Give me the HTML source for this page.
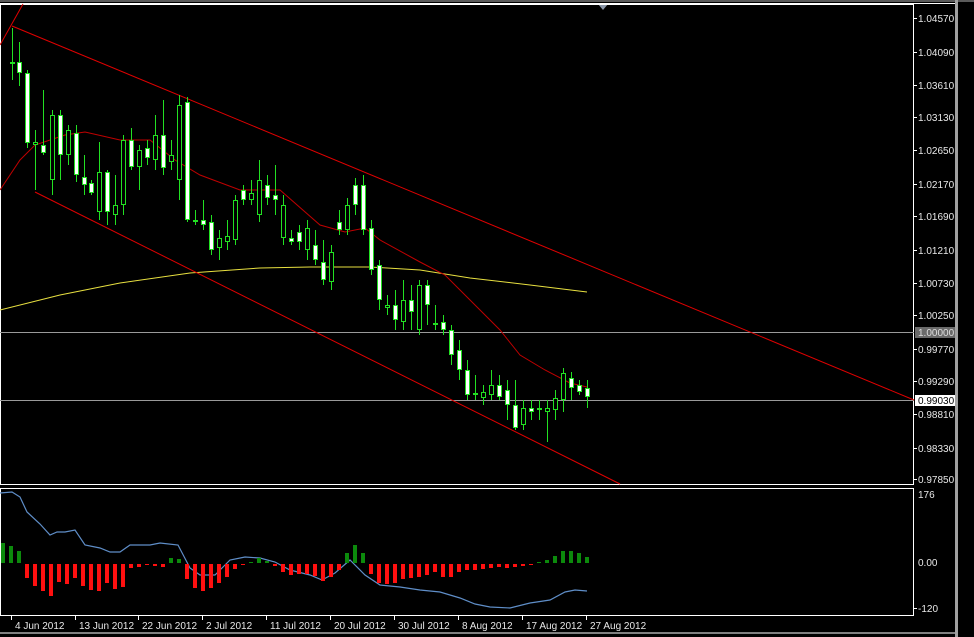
<!DOCTYPE html>
<html><head><meta charset="utf-8"><style>
html,body{margin:0;padding:0;background:#000;width:974px;height:637px;overflow:hidden}
svg{display:block}
text{font-family:"Liberation Sans",sans-serif;font-size:10px;fill:#e8e8e8}
#cd rect,#cd line{shape-rendering:crispEdges}
</style></head><body>
<svg id="s" width="974" height="637" xmlns="http://www.w3.org/2000/svg">
<rect width="974" height="637" fill="#000"/>
<rect x="0" y="0" width="974" height="2" fill="#5a5a5a"/>
<rect x="955" y="0" width="3" height="637" fill="#a0a0a0"/>
<rect x="0" y="3" width="955" height="1" fill="#fff"/>
<polygon points="598,4 608,4 603,10" fill="#8a96a8"/>
<g id="g"></g>
<g id="cd"></g>
</svg>
<script>
var g=document.getElementById('g'),h='',hc='';
function L(pts,c,w){h+='<polyline fill="none" stroke="'+c+'" stroke-width="'+(w||1)+'" points="'+pts.map(p=>p.join(',')).join(' ')+'"/>';}
function R(x,y,w,hh,f,s){h+='<rect x="'+x+'" y="'+y+'" width="'+w+'" height="'+hh+'" fill="'+f+'"'+(s?' stroke="'+s+'"':'')+'/>';}
function T(x,y,t,c){h+='<text x="'+x+'" y="'+y+'"'+(c?' style="fill:'+c+'"':'')+'>'+t+'</text>';}
h+='<rect x="0.5" y="4.5" width="913" height="480" fill="none" stroke="#fff"/>';
h+='<rect x="0.5" y="488.5" width="913" height="127" fill="none" stroke="#fff"/>';
L([[0,633],[955,633]],'#fff');
L([[0,332.5],[914,332.5]],'#9a9a9a');L([[0,400.5],[914,400.5]],'#9a9a9a');
L([[0,310],[60,295],[120,283],[190,273],[260,268],[310,267],[370,267],[420,270],[470,278],[530,285],[587,292]],'#e8e040');
L([[0,190],[20,160],[35,145],[65,135],[85,132],[120,140],[150,140],[175,160],[200,175],[240,190],[280,190],[320,225],[345,232],[365,228],[380,240],[420,262],[445,275],[470,300],[500,330],[520,355],[545,370],[570,383],[587,387]],'#c00000');
L([[12,26],[914,400]],'#e00000');L([[35,192],[620,484]],'#e00000');L([[0,45],[23,4]],'#e00000');
var c=[[12,62,64,28,80,1],[19,62,73,42,86,1],[27,73,143,70,148,1],[35,142,145,130,190,0],[43,145,153,90,155,1],[52,115,180,110,195,0],[60,115,155,110,180,1],[68,130,155,125,165,0],[76,133,175,125,182,1],[84,177,185,155,195,1],[91,183,193,180,195,1],[99,172,212,142,220,0],[107,172,212,170,225,1],[115,205,215,175,225,0],[123,140,205,135,215,0],[131,140,167,128,170,1],[139,150,167,145,190,0],[147,148,158,140,165,1],[155,135,160,115,170,0],[163,135,168,100,175,1],[171,155,162,140,170,0],[179,105,180,95,200,0],[187,102,220,97,222,1],[195,220,222,210,225,0],[203,220,225,200,230,1],[211,222,250,215,255,1],[219,238,248,230,260,0],[227,236,242,220,250,0],[235,200,240,195,245,0],[243,190,200,185,205,1],[251,193,200,180,205,0],[259,180,215,160,222,0],[267,185,198,175,205,1],[275,195,200,165,215,1],[283,205,238,195,245,0],[291,238,242,230,245,1],[299,232,242,225,250,1],[307,228,250,220,260,0],[315,245,260,230,265,1],[323,262,280,240,285,1],[331,252,282,245,290,0],[339,222,230,210,235,1],[347,205,230,198,235,0],[355,185,205,178,215,1],[363,185,230,175,235,1],[371,228,270,220,275,1],[379,265,300,260,310,1],[387,305,308,295,315,0],[395,305,320,290,330,1],[403,300,322,280,330,0],[411,300,312,285,330,1],[419,285,330,280,335,0],[427,285,305,280,325,1],[435,323,325,305,330,0],[443,322,330,315,335,1],[451,330,355,325,365,1],[459,350,370,340,380,1],[467,370,395,360,400,1],[475,393,395,375,400,0],[483,392,398,385,405,0],[491,385,395,370,400,0],[499,385,397,375,400,1],[507,390,405,380,420,1],[515,405,428,380,430,1],[523,408,425,400,430,0],[531,408,412,400,420,1],[539,408,410,400,420,0],[547,408,412,400,442,0],[555,398,410,390,420,0],[563,373,400,368,412,0],[571,378,388,372,400,1],[579,385,392,380,395,1],[587,388,397,380,408,1]];
var G='#22e022';
c.forEach(function(k){var x=k[0];hc+='<rect x="'+x+'" y="'+k[3]+'" width="1" height="'+(k[4]-k[3])+'" fill="'+G+'"/>';var hh=k[2]-k[1];
if(hh<3){hc+='<rect x="'+(x-2)+'" y="'+k[1]+'" width="5" height="2" fill="'+G+'"/>';}
else{hc+='<rect x="'+(x-2)+'" y="'+k[1]+'" width="5" height="'+hh+'" fill="'+G+'"/>';hc+='<rect x="'+(x-1)+'" y="'+(k[1]+1)+'" width="3" height="'+(hh-2)+'" fill="'+(k[5]?'#fff':'#000')+'"/>';}});
var pl=[['1.04570',18],['1.04090',52],['1.03610',85],['1.03130',117],['1.02650',150],['1.02170',184],['1.01690',216],['1.01210',250],['1.00730',283],['1.00250',315],['0.99770',349],['0.99290',381],['0.98810',414],['0.98330',448],['0.97850',479]];
pl.forEach(function(p){L([[914,p[1]+.5],[917,p[1]+.5]],'#fff');T(918,p[1]+4,p[0]);});
R(915,327,40,11,'#6a6a6a');T(918,336,'1.00000','#ddd');
R(915,395,40,11,'#fff');T(918,404,'0.99030','#000');
T(918,498,'176');T(918,566,'0.00');L([[914,608.5],[917,608.5]],'#fff');T(918,612,'-120');
// histogram: values (px), positive=green up, negative=red down
var hv={3:20,11:17,19:12,27:-14,35:-22,43:-27,51:-32,59:-18,67:-20,75:-14,83:-22,91:-26,99:-27,107:-19,115:-25,123:-23,131:-4,139:-3,147:-1,155:-2,163:-3,171:5,179:4,187:-15,195:-24,203:-27,211:-24,219:-19,227:-13,235:-5,243:-1,251:1,259:5,267:2,275:-2,283:-8,291:-11,299:-10,307:-10,315:-12,323:-17,331:-13,339:-6,347:10,355:18,363:10,371:-10,379:-19,387:-20,395:-19,403:-15,411:-14,419:-13,427:-11,435:-8,443:-13,451:-13,459:-8,467:-6,475:-6,483:-5,491:-4,499:-3,507:-4,515:-3,523:-2,531:-1,539:1,547:3,555:7,563:12,571:12,579:10,587:6};
for(var k in hv){var x=+k,v=hv[k];if(v<0)hc+='<rect x="'+(x-2)+'" y="564" width="4" height="'+(-v)+'" fill="#ff1010"/>';else hc+='<rect x="'+(x-2)+'" y="'+(563-v)+'" width="4" height="'+v+'" fill="#0c8a0c"/>';}
L([[0,493],[12,492],[20,497],[27,512],[40,524],[50,535],[57,532],[65,532],[75,530],[85,545],[100,548],[110,552],[120,552],[130,545],[150,545],[160,543],[178,545],[190,568],[200,575],[215,575],[230,560],[245,557],[260,558],[275,562],[290,570],[310,575],[322,580],[335,573],[350,560],[365,575],[380,585],[400,587],[420,590],[440,592],[460,598],[475,604],[490,607],[510,608],[530,603],[550,600],[565,592],[575,590],[587,591]],'#5f8ec8',1.2);
var d=[['4 Jun 2012',12],['13 Jun 2012',76],['22 Jun 2012',139],['2 Jul 2012',203],['11 Jul 2012',267],['20 Jul 2012',331],['30 Jul 2012',395],['8 Aug 2012',459],['17 Aug 2012',523],['27 Aug 2012',587]];
d.forEach(function(q){L([[q[1]-0.5,616],[q[1]-0.5,620]],'#fff');T(q[1]+3,629,q[0]);});
g.innerHTML=h;document.getElementById('cd').innerHTML=hc;
</script>
</body></html>
